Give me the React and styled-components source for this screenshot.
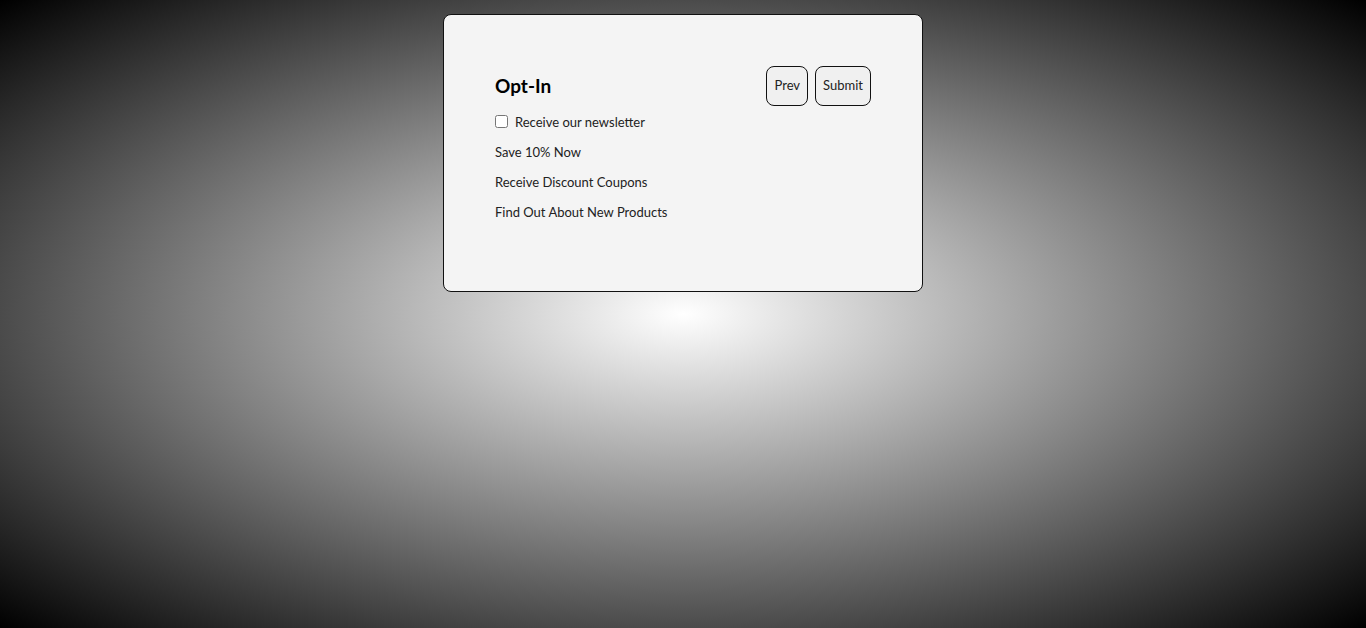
import React, { useState } from "react";
import styled, { createGlobalStyle } from "styled-components";

const GlobalStyle = createGlobalStyle`
  html, body {
    margin: 0;
    padding: 0;
    height: 100%;
  }
  body {
    font-family: Lato, "Noto Sans", "Liberation Sans", sans-serif;
    color: #222;
  }
  #root {
    height: 100%;
  }
`;

const Page = styled.div`
  box-sizing: border-box;
  height: 100vh;
  display: flex;
  justify-content: center;
  align-items: flex-start;
  padding-top: 14px;
  background: radial-gradient(ellipse farthest-corner at 50% 50%, #ffffff 0%, #000000 100%);
  overflow: hidden;
`;

const Card = styled.form`
  box-sizing: border-box;
  width: 480px;
  height: 278px;
  padding: 51px 51px;
  background-color: #f4f4f4;
  border: 1px solid #111;
  border-radius: 8px;
  display: flex;
  flex-direction: column;
`;

const Header = styled.div`
  display: flex;
  flex-direction: row;
  align-items: center;
  justify-content: space-between;
  margin-bottom: 1px;
`;

const Title = styled.h2`
  margin: 0;
  font-size: 19px;
  font-weight: 700;
  color: #000;
  position: relative;
  top: -1px;
`;

const ButtonsBox = styled.div`
  display: flex;
  flex-direction: row;
  gap: 7px;
`;

const NavButton = styled.button`
  box-sizing: border-box;
  height: 40px;
  padding: 0 7px 2px;
  font-family: inherit;
  font-size: 13px;
  color: #222;
  background-color: #f0f0f0;
  border: 1px solid #111;
  border-radius: 8px;
  cursor: pointer;
`;

const CheckRow = styled.label`
  display: flex;
  flex-direction: row;
  align-items: center;
  gap: 7px;
  height: 30px;
  font-size: 13px;
`;

const Check = styled.input`
  margin: 0;
  width: 13px;
  height: 13px;
  position: relative;
  top: -1px;
`;

const Perk = styled.div`
  display: flex;
  align-items: center;
  height: 30px;
  font-size: 13px;
`;

function App() {
  const [newsletter, setNewsletter] = useState(false);

  const perks = ["Save 10% Now", "Receive Discount Coupons", "Find Out About New Products"];

  return (
    <>
      <GlobalStyle />
      <Page>
        <Card onSubmit={(e) => e.preventDefault()}>
          <Header>
            <Title>Opt-In</Title>
            <ButtonsBox>
              <NavButton type="button">Prev</NavButton>
              <NavButton type="submit">Submit</NavButton>
            </ButtonsBox>
          </Header>
          <CheckRow>
            <Check
              type="checkbox"
              checked={newsletter}
              onChange={(e) => setNewsletter(e.target.checked)}
            />
            Receive our newsletter
          </CheckRow>
          {perks.map((p) => (
            <Perk key={p}>{p}</Perk>
          ))}
        </Card>
      </Page>
    </>
  );
}

export default App;
